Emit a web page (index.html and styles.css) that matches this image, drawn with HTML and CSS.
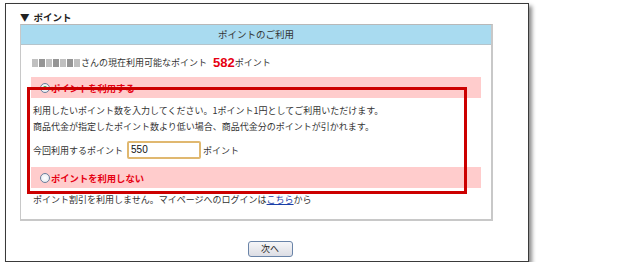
FILE: index.html
```html
<!DOCTYPE html>
<html lang="ja">
<head>
<meta charset="utf-8">
<link rel="stylesheet" href="styles.css">
</head>
<body>
<div class="frame">
  <div class="section-title"><span class="tri">▼</span>ポイント</div>
  <div class="panel">
    <div class="panel-head">ポイントのご利用</div>
    <div class="panel-body">
      <div class="avail"><span class="blur"><i></i><i class="d"></i><i></i><i class="d"></i><i></i><i class="d"></i><i></i></span>さんの現在利用可能なポイント<span class="num">582</span>ポイント</div>
      <div class="opt"><span class="radio on"></span><span class="opt-label">ポイントを利用する</span></div>
      <div class="desc">
        <p>利用したいポイント数を入力してください。1ポイント1円としてご利用いただけます。</p>
        <p>商品代金が指定したポイント数より低い場合、商品代金分のポイントが引かれます。</p>
      </div>
      <div class="use-row">今回利用するポイント<span class="input">550</span>ポイント</div>
      <div class="opt"><span class="radio"></span><span class="opt-label">ポイントを利用しない</span></div>
      <div class="note">ポイント割引を利用しません。マイページへのログインは<a href="#">こちら</a>から</div>
    </div>
  </div>
  <div class="actions"><span class="btn">次へ</span></div>
  <div class="highlight"></div>
</div>
</body>
</html>
```

FILE: styles.css
```css
html, body {
  margin: 0;
  padding: 0;
  background: #fff;
}
body {
  font-family: "Noto Sans CJK JP", "Noto Sans", sans-serif;
  font-size: 9px;
  color: #333;
}
.frame {
  position: relative;
  margin: 3px 0 0 5px;
  width: 522px;
  height: 257px;
  border: 1px solid #3a3a3a;
  box-shadow: 3px 3px 4px rgba(0,0,0,0.45);
  background: #fff;
}
.section-title {
  margin: 6px 0 0 14px;
  height: 14px;
  line-height: 14px;
  font-weight: bold;
  font-size: 9.5px;
  color: #222;
}
.tri {
  margin-right: 4px;
}
.panel {
  margin: 0 0 0 14px;
  width: 470px;
  height: 194px;
  border: 1px solid #c8c8c8;
  border-right-width: 2px;
  border-bottom-width: 2px;
  border-top-color: #b8b8b8;
}
.panel-head {
  height: 19px;
  line-height: 19px;
  background: #a9dbf0;
  border-bottom: 1px solid #b4c4cc;
  text-align: center;
  color: #333;
  font-size: 9.5px;
}
.panel-body {
  padding: 0 0 0 10px;
}
.avail {
  margin-top: 10px;
  height: 16px;
  line-height: 16px;
  padding-left: 1px;
  display: flex;
  align-items: center;
}
.blur {
  display: inline-flex;
  gap: 1px;
  margin-right: 1px;
}
.blur i {
  display: block;
  width: 6px;
  height: 8px;
  background: #c0c0c0;
}
.blur i.d { background: #959595; width: 6px; }
.num {
  color: #e60012;
  font-weight: bold;
  font-family: "Liberation Sans", Arial, sans-serif;
  font-size: 13px;
  margin-left: 6px;
}
.opt {
  width: 450px;
  height: 21px;
  background: #ffcccc;
  display: flex;
  align-items: center;
  padding-left: 9px;
  box-sizing: border-box;
}
.avail + .opt { margin-top: 6px; }
.radio {
  width: 8px;
  height: 8px;
  border-radius: 50%;
  border: 1px solid #6a7f9c;
  background: radial-gradient(circle, #fff 0, #e4e8ee 100%);
  margin-right: 1px;
  position: relative;
}
.radio.on::after {
  content: "";
  position: absolute;
  left: 2px;
  top: 2px;
  width: 4px;
  height: 4px;
  border-radius: 50%;
  background: #3a9a3a;
}
.opt-label {
  color: #e60012;
  font-weight: bold;
  font-size: 9.3px;
}
.desc {
  margin-top: 5px;
  padding-left: 2px;
}
.desc p {
  margin: 0;
  height: 16px;
  line-height: 16px;
}
.use-row {
  margin-top: 6px;
  padding-left: 2px;
  display: flex;
  align-items: center;
  height: 18px;
  margin-bottom: 8px;
}
.input {
  display: inline-block;
  width: 68px;
  height: 14px;
  line-height: 14px;
  margin: 0 2px 0 4px;
  border: 2px solid #e0b870;
  border-radius: 2px;
  padding-left: 2px;
  color: #111;
  font-family: "Liberation Sans", sans-serif;
  font-size: 10px;
}
.note {
  padding-left: 2px;
  margin-top: 4px;
  height: 16px;
  line-height: 16px;
}
.note a {
  color: #1a3fa8;
  text-decoration: underline;
}
.actions {
  display: flex;
  justify-content: center;
  margin-top: 20px;
  padding-left: 6px;
}
.btn {
  display: inline-block;
  width: 43px;
  height: 14px;
  line-height: 14px;
  border: 1px solid #6a84a8;
  border-radius: 3px;
  background: linear-gradient(#f6f6f8, #dcdde4);
  text-align: center;
  color: #222;
  font-size: 9px;
}
.highlight {
  position: absolute;
  left: 21px;
  top: 83px;
  width: 434px;
  height: 101px;
  border: 3px solid #cc0000;
}
```
